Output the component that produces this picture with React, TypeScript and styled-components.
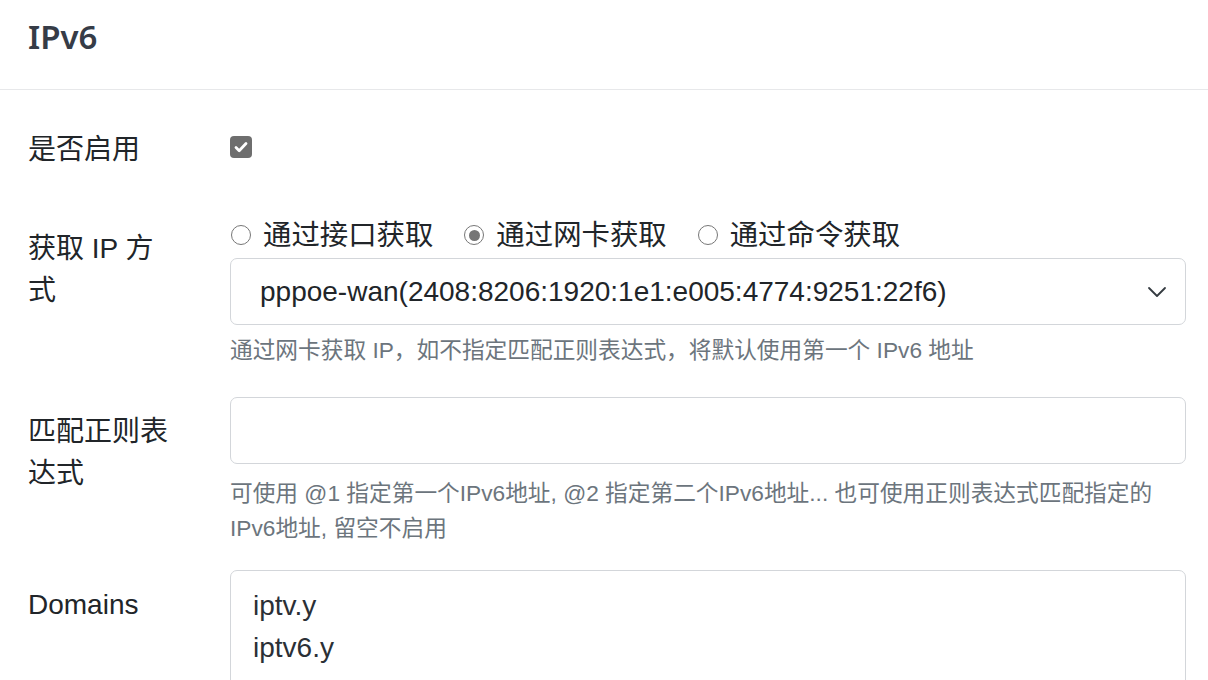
import React from "react";
import styled, { createGlobalStyle } from "styled-components";

const GlobalStyle = createGlobalStyle`
  body {
    margin: 0;
    background: #ffffff;
    font-family: "Liberation Sans", "Noto Sans CJK SC", sans-serif;
    color: #212529;
  }
`;

const Card = styled.div`
  width: 1208px;
  background: #ffffff;
`;

const Header = styled.div`
  height: 90px;
  box-sizing: border-box;
  padding: 16px 28px 0;
  border-bottom: 1px solid #e7e8ea;
`;

const Title = styled.h5`
  margin: 0;
  font-family: "Noto Sans", "Noto Sans CJK SC", sans-serif;
  font-size: 33px;
  line-height: 42px;
  font-weight: 600;
  color: #363c47;
`;

const Body = styled.div`
  padding: 25px 22px 0 28px;
`;

const Row = styled.div<{ $gap?: number }>`
  display: grid;
  grid-template-columns: 202px 1fr;
  margin-bottom: ${(p) => p.$gap ?? 29}px;
`;

const Label = styled.label`
  padding: 14px 52px 14px 0;
  font-size: 28px;
  line-height: 42px;
  color: #212529;
`;

const Field = styled.div<{ $top?: number }>`
  display: flex;
  flex-direction: column;
  padding-top: ${(p) => p.$top ?? 0}px;
  min-width: 0;
`;

const CheckBox = styled.span`
  width: 22px;
  height: 22px;
  border-radius: 4px;
  background: #6e6e6e;
  display: flex;
  align-items: center;
  justify-content: center;
`;

const RadioGroup = styled.div`
  display: flex;
  align-items: center;
  height: 42px;
  margin-bottom: 2px;
`;

const RadioItem = styled.label`
  display: flex;
  align-items: center;
  margin-right: 30px;
  font-size: 28.4px;
  line-height: 42px;
  color: #212529;
`;

const RadioCircle = styled.span<{ $checked?: boolean }>`
  width: 20px;
  height: 20px;
  box-sizing: border-box;
  border-radius: 50%;
  border: 1.5px solid #777777;
  margin-right: 12px;
  margin-left: 1px;
  display: flex;
  align-items: center;
  justify-content: center;
  &::after {
    content: "";
    display: ${(p) => (p.$checked ? "block" : "none")};
    width: 11px;
    height: 11px;
    border-radius: 50%;
    background: #767676;
  }
`;

const SelectBox = styled.div`
  height: 67px;
  box-sizing: border-box;
  border: 1px solid #d3d6da;
  border-radius: 7px;
  padding: 0 18px 0 29px;
  display: flex;
  align-items: center;
  justify-content: space-between;
  font-size: 28px;
  color: #212529;
`;

const TextInput = styled.div`
  height: 67px;
  box-sizing: border-box;
  border: 1px solid #d3d6da;
  border-radius: 7px;
`;

const TextArea = styled.div`
  box-sizing: border-box;
  border: 1px solid #d3d6da;
  border-radius: 7px;
  padding: 14px 22px;
  height: 160px;
  font-size: 28px;
  line-height: 42px;
  color: #2b3036;
`;

const Help = styled.div<{ $mt?: number }>`
  margin-top: ${(p) => p.$mt ?? 8}px;
  font-size: 22.7px;
  line-height: 35px;
  color: #6c757d;
`;

const Chevron = () => (
  <svg width="20" height="12" viewBox="0 0 20 12" fill="none">
    <path d="M2 2l8 8 8-8" stroke="#343a40" strokeWidth="1.8" strokeLinecap="round" strokeLinejoin="round" />
  </svg>
);

const Check = () => (
  <svg width="16" height="16" viewBox="0 0 16 16" fill="none">
    <path d="M3 8.5l3.2 3.2L13 4.5" stroke="#ffffff" strokeWidth="2.8" strokeLinecap="round" strokeLinejoin="round" />
  </svg>
);

const radios = [
  { label: "通过接口获取", checked: false },
  { label: "通过网卡获取", checked: true },
  { label: "通过命令获取", checked: false },
];

export default function App() {
  return (
    <Card>
      <GlobalStyle />
      <Header>
        <Title>IPv6</Title>
      </Header>
      <Body>
        <Row>
          <Label>是否启用</Label>
          <Field $top={21}>
            <CheckBox>
              <Check />
            </CheckBox>
          </Field>
        </Row>
        <Row>
          <Label>获取 IP 方式</Label>
          <Field>
            <RadioGroup>
              {radios.map((r) => (
                <RadioItem key={r.label}>
                  <RadioCircle $checked={r.checked} />
                  {r.label}
                </RadioItem>
              ))}
            </RadioGroup>
            <SelectBox>
              <span>pppoe-wan(2408:8206:1920:1e1:e005:4774:9251:22f6)</span>
              <Chevron />
            </SelectBox>
            <Help>通过网卡获取 IP，如不指定匹配正则表达式，将默认使用第一个 IPv6 地址</Help>
          </Field>
        </Row>
        <Row $gap={24}>
          <Label>匹配正则表达式</Label>
          <Field>
            <TextInput />
            <Help $mt={12}>
              可使用 @1 指定第一个IPv6地址, @2 指定第二个IPv6地址... 也可使用正则表达式匹配指定的 IPv6地址, 留空不启用
            </Help>
          </Field>
        </Row>
        <Row>
          <Label>Domains</Label>
          <Field>
            <TextArea>
              iptv.y
              <br />
              iptv6.y
            </TextArea>
          </Field>
        </Row>
      </Body>
    </Card>
  );
}
